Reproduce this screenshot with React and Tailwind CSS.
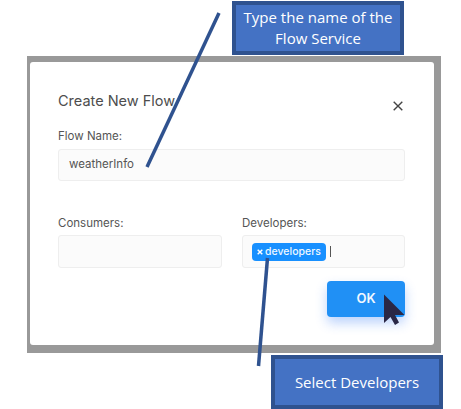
const SANS = "font-['Inter',sans-serif]"

function Callout({ className, children }) {
  return (
    <div className={`flex h-[54px] w-[172px] items-center justify-center border-4 border-[#2f528f] bg-[#4472c4] text-center font-['Open_Sans','Liberation_Sans',sans-serif] text-[15px] leading-[21px] text-white ${className}`}>
      {children}
    </div>
  )
}

function Arrow() {
  return (
    <svg className="absolute left-[380px] top-[290px]" width="28" height="38" viewBox="0 0 28 38">
      <path d="M4 4.5 L4 33 L10.5 27 L15 35 L19 32.5 L15 25 L24.5 25 Z" fill="#2a2745" />
    </svg>
  )
}

export default function App() {
  return (
    <div className="relative h-[409px] w-[461px] overflow-hidden bg-white">
      <Callout className="ml-[232px] mt-px">
        <span>Type the name of the<br />Flow Service</span>
      </Callout>

      <div className="ml-[27px] mt-px h-[297px] w-[414px] bg-[#999999] pb-2 pl-[3px] pr-[7px] pt-1.5">
        <div className={`h-full rounded-[3px] bg-white pl-[28px] pr-[29px] pt-[29px] text-[#555555] ${SANS}`}>
          <div className="flex h-[20px] items-center justify-between">
            <span className="text-[14.5px] text-[#4d4d4d]">Create New Flow</span>
            <svg className="mr-0.5 mt-[9px]" width="10" height="10" viewBox="0 0 10 10">
              <path d="M0.7 0.7 L9.3 9.3 M9.3 0.7 L0.7 9.3" stroke="#444444" strokeWidth="1.4" fill="none" />
            </svg>
          </div>

          <div className="mt-[17px] text-[11.5px] leading-[16px]">Flow Name:</div>
          <div className="mt-[5px] flex h-[32px] items-center rounded-[3px] border border-[#eeeeee] bg-[#fbfbfb] pl-[10px] text-[11.5px] text-[#555555]">
            weatherInfo
          </div>

          <div className="mt-[34px] grid grid-cols-[164px_163px] gap-x-[20px]">
            <div>
              <div className="text-[11.5px] leading-[16px]">Consumers:</div>
              <div className="mt-[4px] h-[33px] rounded-[3px] border border-[#eeeeee] bg-[#fbfbfb]" />
            </div>
            <div>
              <div className="text-[11.5px] leading-[16px]">Developers:</div>
              <div className="mt-[4px] flex h-[33px] items-center rounded-[3px] border border-[#eeeeee] bg-[#fbfbfb] pl-[9px]">
                <span className="flex h-[18px] w-[74px] items-center justify-center gap-[2px] rounded-[4px] bg-[#1890ff] text-[10.5px] font-medium text-[#eef7ff]">
                  <svg width="6" height="6" viewBox="0 0 6 6">
                    <path d="M0.7 0.7 L5.3 5.3 M5.3 0.7 L0.7 5.3" stroke="#ffffff" strokeWidth="1.5" fill="none" />
                  </svg>
                  developers
                </span>
                <span className="ml-1 h-[11px] w-px bg-[#555555]" />
              </div>
            </div>
          </div>

          <div className="mt-[13px] flex justify-end">
            <button className="h-9 w-[78px] rounded-[4px] bg-[#2090f5] text-[13px] font-semibold text-[#f2f8ff] shadow-[0_6px_12px_rgba(32,110,245,0.3)]">
              OK
            </button>
          </div>
        </div>
      </div>

      <Callout className="ml-[271px] mt-0.5">Select Developers</Callout>

      {/* annotation lines */}
      <svg className="absolute left-0 top-0" width="461" height="409" viewBox="0 0 461 409">
        <path d="M219 13 L147 167" stroke="#2f528f" strokeWidth="3.5" fill="none" />
        <path d="M267.5 258 L258.5 366" stroke="#2f528f" strokeWidth="3.5" fill="none" />
      </svg>
      <Arrow />
    </div>
  )
}
